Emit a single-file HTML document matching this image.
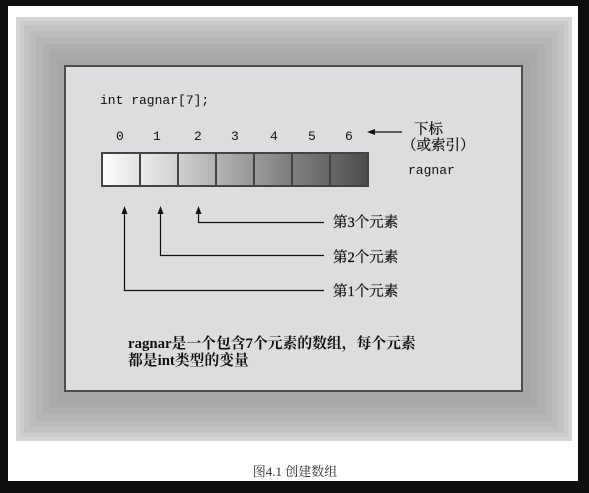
<!DOCTYPE html>
<html><head><meta charset="utf-8"><style>
body{margin:0;width:589px;height:493px;background:#0e0e0e;position:relative;overflow:hidden}
.w{position:absolute;left:8px;top:6px;width:570px;height:475px;background:#fff}
.f{position:absolute;left:16px;top:17px;width:556px;height:424px;background:#a7a7a7;
box-shadow:inset 0 0 0 4px #d4d4d4,inset 0 0 0 8px #cbcbcb,inset 0 0 0 14px #c3c3c3,inset 0 0 0 20px #bcbcbc,inset 0 0 0 27px #b5b5b5,inset 0 0 0 34px #afafaf,inset 0 0 0 42px #aaaaaa}
svg{position:absolute;left:0;top:0}
</style></head><body>
<div class="w"></div><div class="f"></div>
<svg width="589" height="493" xmlns="http://www.w3.org/2000/svg">
<defs>
<linearGradient id="g0"><stop offset="0" stop-color="#fff"/><stop offset="1" stop-color="#e2e2e2"/></linearGradient>
<linearGradient id="g1"><stop offset="0" stop-color="#ececec"/><stop offset="1" stop-color="#cfcfcf"/></linearGradient>
<linearGradient id="g2"><stop offset="0" stop-color="#d0d0d0"/><stop offset="1" stop-color="#b2b2b2"/></linearGradient>
<linearGradient id="g3"><stop offset="0" stop-color="#b5b5b5"/><stop offset="1" stop-color="#969696"/></linearGradient>
<linearGradient id="g4"><stop offset="0" stop-color="#9a9a9a"/><stop offset="1" stop-color="#7c7c7c"/></linearGradient>
<linearGradient id="g5"><stop offset="0" stop-color="#808080"/><stop offset="1" stop-color="#666"/></linearGradient>
<linearGradient id="g6"><stop offset="0" stop-color="#686868"/><stop offset="1" stop-color="#4c4c4c"/></linearGradient>
</defs>
<rect x="65" y="66" width="457" height="325" fill="#dddcdf" stroke="#4a4f4a" stroke-width="2"/>
<g font-family="Liberation Mono, monospace" font-size="13" fill="#111">
<text x="100" y="104">int ragnar[7];</text>
<text x="116" y="140">0</text><text x="153" y="140">1</text><text x="194" y="140">2</text><text x="231" y="140">3</text><text x="270" y="140">4</text><text x="308" y="140">5</text><text x="345" y="140">6</text>
<text x="408" y="174">ragnar</text>
</g>
<g stroke="#444" stroke-width="2">
<rect x="102" y="153" width="38" height="33" fill="url(#g0)"/>
<rect x="140" y="153" width="38" height="33" fill="url(#g1)"/>
<rect x="178" y="153" width="38" height="33" fill="url(#g2)"/>
<rect x="216" y="153" width="38" height="33" fill="url(#g3)"/>
<rect x="254" y="153" width="38" height="33" fill="url(#g4)"/>
<rect x="292" y="153" width="38" height="33" fill="url(#g5)"/>
<rect x="330" y="153" width="38" height="33" fill="url(#g6)"/>
</g>
<g stroke="#111" stroke-width="1.2" fill="none">
<path d="M124.5 212V290.5H324M160.5 212V255.5H324M198.5 212V222.5H324M373 132H402"/>
</g>
<g fill="#111">
<path d="M124.5 206l-3 8h6z M160.5 206l-3 8h6z M198.5 206l-3 8h6z M367 132l8-3v6z"/>
</g>
<g font-family="Liberation Serif, 'Noto Serif CJK SC', serif" font-size="14.5" fill="#111" stroke="#111" stroke-width="0.25">
<text x="414" y="134">下标</text>
<text x="402" y="150">（或索引）</text>
<text x="333" y="227">第3个元素</text>
<text x="333" y="262">第2个元素</text>
<text x="333" y="296">第1个元素</text>
</g>
<g font-family="Liberation Serif, 'Noto Serif CJK SC', serif" font-size="14.8" fill="#111" font-weight="bold">
<text x="128" y="348">ragnar是一个包含7个元素的数组，每个元素</text>
<text x="128" y="365">都是int类型的变量</text>
</g>
<text x="295" y="476" text-anchor="middle" font-family="Liberation Serif, 'Noto Serif CJK SC', serif" font-size="13" fill="#333">图4.1 创建数组</text>
</svg>
</body></html>
